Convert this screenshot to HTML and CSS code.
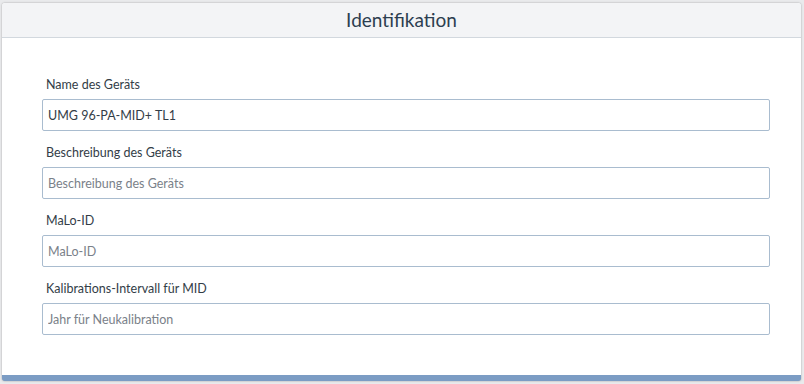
FILE: index.html
```html
<!DOCTYPE html>
<html lang="de">
<head>
  <meta charset="UTF-8">
  <meta name="viewport" content="width=device-width, initial-scale=1.0">
  <title>Identifikation</title>
  <link rel="stylesheet" href="styles.css">
</head>
<body>
  <div class="card">
    <div class="card-header">Identifikation</div>
    <div class="card-body">
      <div class="form-group">
        <label for="name">Name des Geräts</label>
        <input type="text" id="name" value="UMG 96-PA-MID+ TL1">
      </div>
      <div class="form-group">
        <label for="desc">Beschreibung des Geräts</label>
        <input type="text" id="desc" placeholder="Beschreibung des Geräts">
      </div>
      <div class="form-group">
        <label for="malo">MaLo-ID</label>
        <input type="text" id="malo" placeholder="MaLo-ID">
      </div>
      <div class="form-group">
        <label for="kal">Kalibrations-Intervall für MID</label>
        <input type="text" id="kal" placeholder="Jahr für Neukalibration">
      </div>
    </div>
  </div>
</body>
</html>
```

FILE: styles.css
```css
body {
  font-family: Lato, "Open Sans", sans-serif;
  background-color: #e9eaec;
  margin: 0;
  padding: 3px 3px 3px 2px;
  height: 384px;
  box-sizing: border-box;
}
.card {
  background-color: white;
  border-radius: 3px;
  box-shadow: 0 0 2px rgba(0, 0, 0, 0.35);
  border-bottom: 6px solid #7b9cc4;
  height: 372px;
  display: flex;
  flex-direction: column;
}
.card-header {
  background-color: #f3f4f6;
  border-bottom: 1px solid #d2d8de;
  border-radius: 3px 3px 0 0;
  height: 34px;
  line-height: 34px;
  text-align: center;
  font-size: 19px;
  color: #2c3e50;
}
.card-body {
  padding: 38px 31px 0 40px;
}
.form-group {
  margin-bottom: 13px;
}
label {
  display: block;
  font-size: 12.5px;
  color: #333d47;
  margin: 0 0 5px 4px;
  line-height: 18px;
}
input[type="text"] {
  width: 100%;
  height: 32px;
  padding: 0 5px;
  border: 1px solid #a9bccf;
  border-radius: 2px;
  box-sizing: border-box;
  font-family: inherit;
  font-size: 12.5px;
  color: #333d47;
}
input::placeholder {
  color: #7a8189;
}
```
